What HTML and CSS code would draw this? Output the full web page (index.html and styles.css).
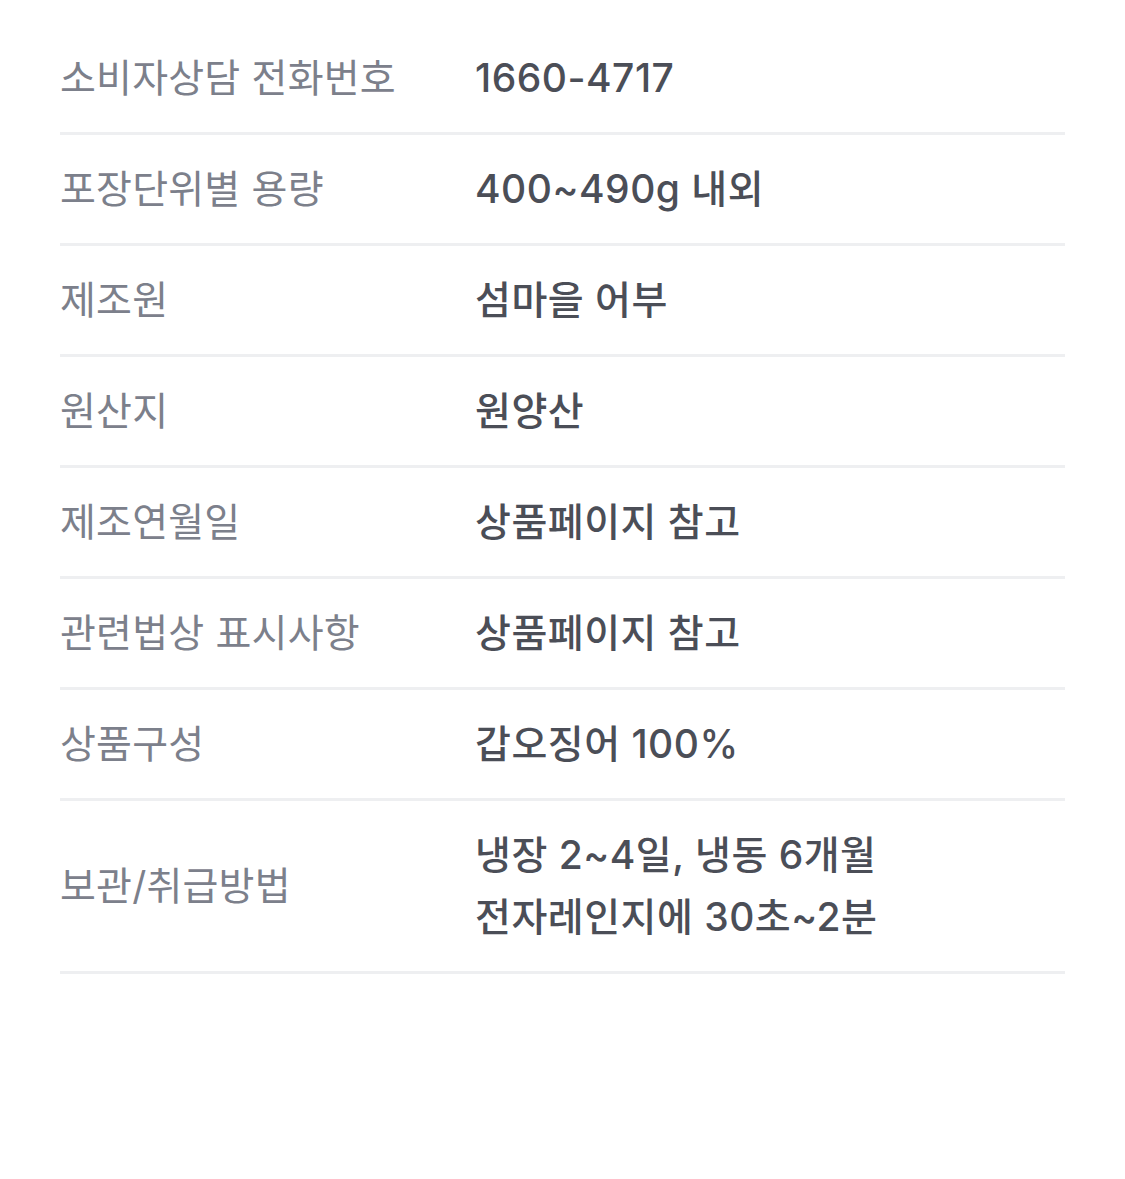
FILE: index.html
```html
<!DOCTYPE html>
<html lang="ko">
<head>
<meta charset="utf-8">
<link rel="stylesheet" href="styles.css">
</head>
<body>
<div class="page">
  <dl class="info">
    <div class="row"><dt class="label">소비자상담 전화번호</dt><dd class="value">1660-4717</dd></div>
    <div class="row"><dt class="label">포장단위별 용량</dt><dd class="value">400~490g 내외</dd></div>
    <div class="row"><dt class="label">제조원</dt><dd class="value">섬마을 어부</dd></div>
    <div class="row"><dt class="label">원산지</dt><dd class="value">원양산</dd></div>
    <div class="row"><dt class="label">제조연월일</dt><dd class="value">상품페이지 참고</dd></div>
    <div class="row"><dt class="label">관련법상 표시사항</dt><dd class="value">상품페이지 참고</dd></div>
    <div class="row"><dt class="label">상품구성</dt><dd class="value">갑오징어 100%</dd></div>
    <div class="row"><dt class="label">보관/취급방법</dt><dd class="value">냉장 2~4일, 냉동 6개월<br>전자레인지에 30초~2분</dd></div>
  </dl>
</div>
</body>
</html>
```

FILE: styles.css
```css
html, body {
  margin: 0;
  padding: 0;
  background: #ffffff;
}
.page {
  padding: 24px 60px 0 60px;
  font-family: "Inter", "Noto Sans CJK KR", "Noto Sans", sans-serif;
}
.info {
  margin: 0;
}
.row {
  display: flex;
  align-items: center;
  padding: 23px 0;
  border-bottom: 3px solid #eeeff1;
}
.label {
  width: 415px;
  flex: none;
  margin: 0;
  font-size: 39px;
  line-height: 62px;
  color: #7c808b;
  letter-spacing: 0.2px;
}
.value {
  margin: 0;
  font-size: 39px;
  font-weight: 500;
  line-height: 62px;
  color: #4b4e57;
  letter-spacing: 0.5px;
}
```
